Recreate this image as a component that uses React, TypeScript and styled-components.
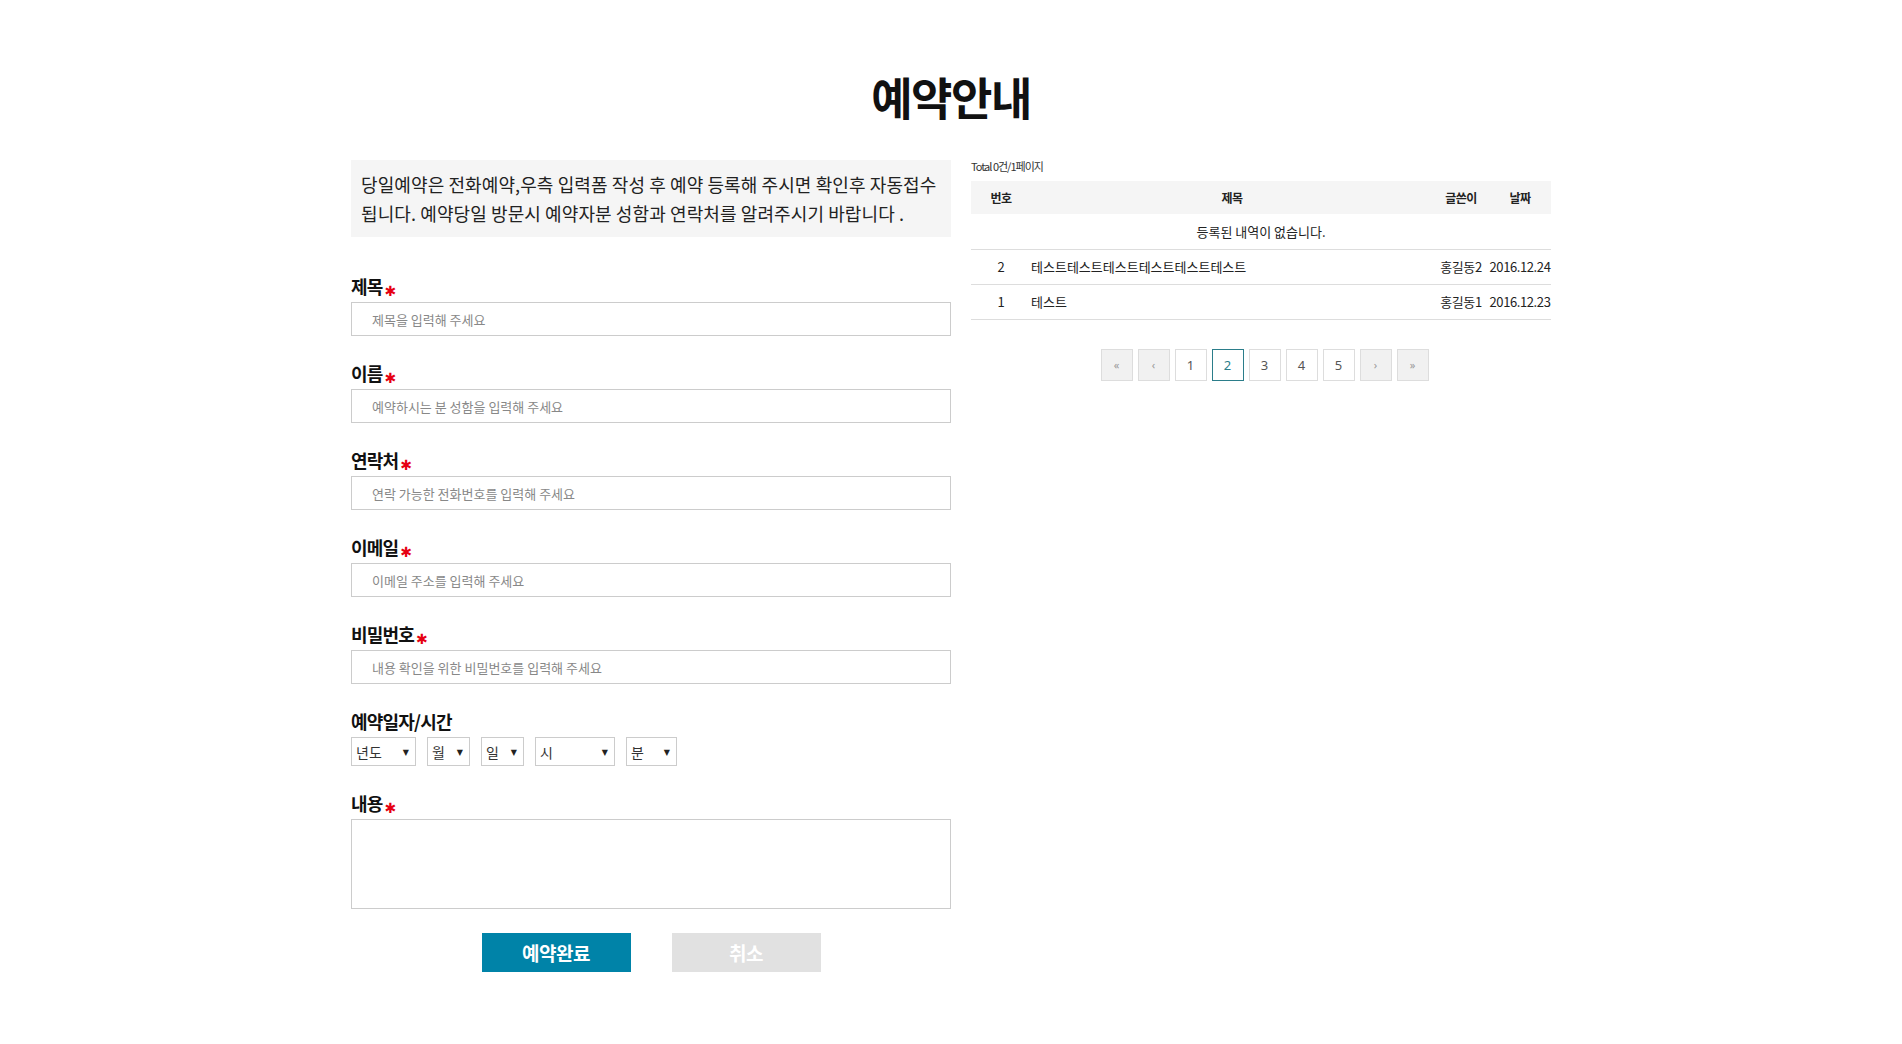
import React from "react";
import styled, { createGlobalStyle } from "styled-components";

const GlobalStyle = createGlobalStyle`
  html, body {
    margin: 0;
    padding: 0;
    background: #fff;
  }
  body {
    font-family: "Noto Sans CJK KR", "Noto Sans", sans-serif;
    color: #111;
  }
  * {
    box-sizing: border-box;
  }
`;

const Page = styled.div`
  padding-top: 70px;
  padding-bottom: 60px;
`;

const Title = styled.h1`
  margin: 0 0 36px;
  text-align: center;
  font-size: 45px;
  line-height: 54px;
  font-weight: 700;
  letter-spacing: -1.5px;
  color: #111;
`;

const Container = styled.div`
  width: 1200px;
  margin: 0 auto;
  display: flex;
  align-items: flex-start;
  gap: 20px;
`;

const LeftCol = styled.div`
  width: 600px;
`;

const RightCol = styled.div`
  width: 580px;
`;

const Notice = styled.div`
  background: #f5f5f5;
  padding: 10px 10px 9px;
  font-size: 18px;
  line-height: 29px;
  letter-spacing: 0.1px;
  color: #222;
`;

const Field = styled.div<{ $first?: boolean }>`
  margin-top: ${(p) => (p.$first ? "37px" : "25px")};
`;

const Label = styled.div`
  font-size: 18px;
  line-height: 24px;
  font-weight: 700;
  letter-spacing: -0.8px;
  color: #111;
  margin-bottom: 4px;
`;

const Req = styled.span`
  color: #e60012;
  font-family: "DejaVu Sans", sans-serif;
  font-size: 14px;
  line-height: 0;
  margin-left: 2px;
  vertical-align: -2px;
`;

const TextInput = styled.input`
  display: block;
  width: 100%;
  height: 34px;
  border: 1px solid #cccccc;
  padding: 0 20px;
  font-family: inherit;
  font-size: 13px;
  color: #333;
  outline: none;
  &::placeholder {
    color: #888;
  }
`;

const SelectRow = styled.div`
  display: flex;
  gap: 11px;
`;

const SelectWrap = styled.div<{ $w: number }>`
  position: relative;
  width: ${(p) => p.$w}px;
  height: 29px;
`;

const Select = styled.select`
  appearance: none;
  width: 100%;
  height: 100%;
  border: 1px solid #cccccc;
  background: #fff;
  padding: 0 0 0 4px;
  font-family: inherit;
  font-size: 14px;
  color: #333;
  border-radius: 0;
  outline: none;
`;

const Arrow = styled.span`
  position: absolute;
  right: 7px;
  top: 50%;
  transform: translateY(-50%);
  font-family: "DejaVu Sans", sans-serif;
  font-size: 8px;
  color: #222;
  pointer-events: none;
`;

const TextArea = styled.textarea`
  display: block;
  width: 100%;
  height: 90px;
  margin-top: 3px;
  border: 1px solid #cccccc;
  resize: none;
  outline: none;
  font-family: inherit;
`;

const Buttons = styled.div`
  margin-top: 24px;
  display: flex;
  justify-content: center;
  gap: 41px;
`;

const Button = styled.button<{ $primary?: boolean }>`
  width: 149px;
  height: 39px;
  border: none;
  background: ${(p) => (p.$primary ? "#0083a8" : "#e1e1e1")};
  color: #fff;
  font-family: inherit;
  font-size: 19px;
  font-weight: 700;
  letter-spacing: -0.5px;
  cursor: pointer;
`;

const Total = styled.div`
  font-size: 11px;
  line-height: 12px;
  letter-spacing: -1px;
  color: #333;
  margin-bottom: 9px;
`;

const Table = styled.table`
  width: 100%;
  border-collapse: collapse;
  table-layout: fixed;
  font-size: 13px;
  letter-spacing: 0;
  color: #222;
`;

const Th = styled.th`
  height: 33px;
  background: #f5f5f5;
  font-size: 12px;
  font-weight: 700;
  letter-spacing: -0.5px;
  text-align: center;
  padding: 0;
`;

const Td = styled.td<{ $align?: string; $tight?: boolean }>`
  height: 35px;
  border-bottom: 1px solid #dddddd;
  text-align: ${(p) => p.$align || "center"};
  letter-spacing: ${(p) => (p.$tight ? "-0.4px" : "0")};
  padding: 0;
  white-space: nowrap;
`;

const Pager = styled.div`
  margin-top: 29px;
  padding-left: 7px;
  display: flex;
  justify-content: center;
  gap: 5px;
`;

const PageBtn = styled.a<{ $nav?: boolean; $active?: boolean }>`
  width: 32px;
  height: 32px;
  display: flex;
  align-items: center;
  justify-content: center;
  border: 1px solid ${(p) => (p.$active ? "#2b7d8a" : "#dddddd")};
  background: ${(p) => (p.$nav ? "#f1f1f1" : "#fff")};
  color: ${(p) => (p.$active ? "#2b7d8a" : p.$nav ? "#999" : "#555")};
  font-size: ${(p) => (p.$nav ? "11px" : "13px")};
  font-family: "Noto Sans", "Noto Sans CJK KR", sans-serif;
  text-decoration: none;
  cursor: pointer;
`;

const fields = [
  { label: "제목", placeholder: "제목을 입력해 주세요" },
  { label: "이름", placeholder: "예약하시는 분 성함을 입력해 주세요" },
  { label: "연락처", placeholder: "연락 가능한 전화번호를 입력해 주세요" },
  { label: "이메일", placeholder: "이메일 주소를 입력해 주세요" },
  { label: "비밀번호", placeholder: "내용 확인을 위한 비밀번호를 입력해 주세요" },
];

const selects = [
  { text: "년도", w: 65 },
  { text: "월", w: 43 },
  { text: "일", w: 43 },
  { text: "시", w: 80 },
  { text: "분", w: 51 },
];

const rows = [
  { no: 2, title: "테스트테스트테스트테스트테스트테스트", writer: "홍길동2", date: "2016.12.24" },
  { no: 1, title: "테스트", writer: "홍길동1", date: "2016.12.23" },
];

const pages = [
  { t: "«", nav: true },
  { t: "‹", nav: true },
  { t: "1" },
  { t: "2", active: true },
  { t: "3" },
  { t: "4" },
  { t: "5" },
  { t: "›", nav: true },
  { t: "»", nav: true },
];

const App = () => {
  return (
    <Page>
      <GlobalStyle />
      <Title>예약안내</Title>
      <Container>
        <LeftCol>
          <Notice>
            당일예약은 전화예약,우측 입력폼 작성 후 예약 등록해 주시면 확인후 자동접수
            됩니다. 예약당일 방문시 예약자분 성함과 연락처를 알려주시기 바랍니다 .
          </Notice>

          {fields.map((f, i) => (
            <Field key={f.label} $first={i === 0}>
              <Label>
                {f.label}
                <Req>✱</Req>
              </Label>
              <TextInput type="text" placeholder={f.placeholder} />
            </Field>
          ))}

          <Field>
            <Label>예약일자/시간</Label>
            <SelectRow>
              {selects.map((s) => (
                <SelectWrap key={s.text} $w={s.w}>
                  <Select defaultValue="">
                    <option value="">{s.text}</option>
                  </Select>
                  <Arrow>▼</Arrow>
                </SelectWrap>
              ))}
            </SelectRow>
          </Field>

          <Field>
            <Label>
              내용
              <Req>✱</Req>
            </Label>
            <TextArea />
          </Field>

          <Buttons>
            <Button $primary>예약완료</Button>
            <Button>취소</Button>
          </Buttons>
        </LeftCol>

        <RightCol>
          <Total>Total 0건/1페이지</Total>
          <Table>
            <colgroup>
              <col style={{ width: 60 }} />
              <col style={{ width: 402 }} />
              <col style={{ width: 56 }} />
              <col style={{ width: 62 }} />
            </colgroup>
            <thead>
              <tr>
                <Th>번호</Th>
                <Th>제목</Th>
                <Th>글쓴이</Th>
                <Th>날짜</Th>
              </tr>
            </thead>
            <tbody>
              <tr>
                <Td colSpan={4}>등록된 내역이 없습니다.</Td>
              </tr>
              {rows.map((r) => (
                <tr key={r.no}>
                  <Td>{r.no}</Td>
                  <Td $align="left">{r.title}</Td>
                  <Td $tight>{r.writer}</Td>
                  <Td $tight>{r.date}</Td>
                </tr>
              ))}
            </tbody>
          </Table>
          <Pager>
            {pages.map((p, i) => (
              <PageBtn key={i} $nav={p.nav} $active={p.active}>
                {p.t}
              </PageBtn>
            ))}
          </Pager>
        </RightCol>
      </Container>
    </Page>
  );
};

export default App;
